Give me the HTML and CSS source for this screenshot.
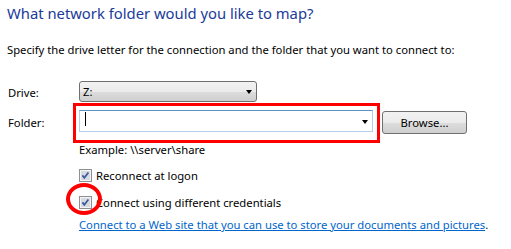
FILE: index.html
```html
<!DOCTYPE html>
<html>
<head>
<meta charset="utf-8">
<link rel="stylesheet" href="styles.css">
</head>
<body>
<div class="page">
  <h1 class="title">What network folder would you like to map?</h1>
  <p class="intro">Specify the drive letter for the connection and the folder that you want to connect to:</p>
  <div class="form">
    <label class="label label-drive">Drive:</label>
    <div class="combo combo-drive">
      <span class="combo-text">Z:</span>
      <span class="arrow"></span>
    </div>
    <label class="label label-folder">Folder:</label>
    <div class="folder-row">
      <div class="folder-field">
        <span class="caret"></span>
        <span class="arrow"></span>
      </div>
      <button class="btn">Browse...</button>
    </div>
    <div class="hint">Example: \\server\share</div>
    <div class="check-row">
      <svg class="checkbox" width="13" height="13" viewBox="0 0 13 13">
        <rect x="0.5" y="0.5" width="12" height="12" fill="#f4f4f4" stroke="#8e8f8f"/>
        <rect x="2" y="2" width="9" height="9" fill="#d6dbe1"/>
        <path d="M3.4 6.4 L5.3 8.8 L9.4 3.4" fill="none" stroke="#3f5a9c" stroke-width="1.7"/>
      </svg>
      <span>Reconnect at logon</span>
    </div>
    <div class="check-row second">
      <svg class="checkbox" width="13" height="13" viewBox="0 0 13 13">
        <rect x="0.5" y="0.5" width="12" height="12" fill="#f4f4f4" stroke="#8e8f8f"/>
        <rect x="2" y="2" width="9" height="9" fill="#d6dbe1"/>
        <path d="M3.4 6.4 L5.3 8.8 L9.4 3.4" fill="none" stroke="#3f5a9c" stroke-width="1.7"/>
      </svg>
      <span>Connect using different credentials</span>
      <span class="circle"></span>
    </div>
    <div class="link-row"><a class="link" href="#">Connect to a Web site that you can use to store your documents and pictures</a>.</div>
  </div>
</div>
</body>
</html>
```
FILE: styles.css
```css
html, body {
  margin: 0;
  padding: 0;
  background: #ffffff;
}
.page {
  padding: 0 0 0 7px;
  font-family: "Noto Sans", "Open Sans", sans-serif;
  font-size: 11.25px;
  color: #000;
}
.title {
  margin: 0;
  padding-top: 2px;
  font-size: 14.8px;
  line-height: 22px;
  font-weight: normal;
  color: #1a3b9a;
}
.intro {
  margin: 18px 0 0 0;
  line-height: 16px;
}
.form {
  display: grid;
  grid-template-columns: 72px 1fr;
  margin-top: 23px;
}
.label {
  grid-column: 1;
  padding-left: 1px;
  line-height: 16px;
}
.label-drive { padding-top: 4px; }
.label-folder { padding-top: 5px; margin-top: 8px; }
.combo {
  grid-column: 2;
  position: relative;
  box-sizing: border-box;
  width: 178px;
  height: 21px;
  border: 1px solid #707070;
  border-radius: 3px;
  background: linear-gradient(#f2f2f2 0%, #ebebeb 50%, #dddddd 51%, #cfcfcf 100%);
  display: flex;
  align-items: center;
  padding-left: 3px;
}
.combo-text { line-height: 16px; }
.arrow {
  position: absolute;
  right: 4px;
  top: 8px;
  width: 0;
  height: 0;
  border-left: 3.5px solid transparent;
  border-right: 3.5px solid transparent;
  border-top: 4px solid #000;
}
.folder-row {
  grid-column: 2;
  display: flex;
  align-items: flex-start;
  margin-top: 8px;
}
.folder-field {
  position: relative;
  box-sizing: border-box;
  width: 294px;
  height: 22px;
  border: 1px solid #b5cfe7;
  border-top-color: #5c90c4;
  background: #fff;
}
.folder-field::after {
  content: "";
  position: absolute;
  left: -7px;
  top: -8px;
  right: -8px;
  bottom: -12px;
  border: 3px solid #ff0000;
}
.caret {
  position: absolute;
  left: 5px;
  top: 1px;
  width: 1px;
  height: 14px;
  background: #000;
}
.folder-field .arrow { top: 9px; right: 4px; }
.btn {
  box-sizing: border-box;
  margin: 1px 0 0 9px;
  width: 85px;
  height: 23px;
  border: 1px solid #707070;
  border-radius: 3px;
  background: linear-gradient(#f2f2f2 0%, #ebebeb 50%, #dddddd 51%, #cfcfcf 100%);
  font: inherit;
  color: #000;
  padding: 0;
}
.hint {
  grid-column: 2;
  margin-top: 8px;
  line-height: 16px;
}
.check-row {
  grid-column: 2;
  position: relative;
  display: flex;
  align-items: flex-start;
  gap: 4px;
  margin-top: 10px;
  line-height: 16px;
}
.check-row.second { margin-top: 11px; }
.checkbox { flex: none; margin-top: 1px; }
.circle {
  position: absolute;
  left: -13px;
  top: -12px;
  width: 36px;
  height: 32px;
  box-sizing: border-box;
  border: 4px solid #ff0000;
  border-radius: 50%;
}
.link-row {
  grid-column: 2;
  margin-top: 6px;
  line-height: 16px;
}
.link {
  color: #0066cc;
  text-decoration: underline;
}
```
